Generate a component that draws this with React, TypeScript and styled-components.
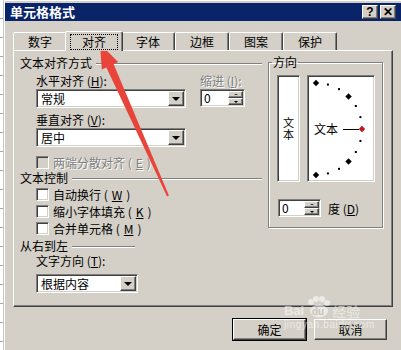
import React from 'react';
import styled, { createGlobalStyle, css } from 'styled-components';

const FACE = '#d4d0c8';
const SHADOW = '#808080';
const DARK = '#404040';
const FONT = '"Noto Sans CJK SC", "DejaVu Sans", sans-serif';

const GlobalStyle = createGlobalStyle`
  html, body {
    margin: 0;
    padding: 0;
    background: ${FACE};
  }
  body {
    font-family: ${FONT};
    font-size: 12px;
    color: #000;
  }
`;

const raised = css`
  background: ${FACE};
  border: 1px solid;
  border-color: #fff ${DARK} ${DARK} #fff;
  box-shadow: inset -1px -1px ${SHADOW};
`;

const sunken = css`
  border: 1px solid;
  border-color: ${SHADOW} #fff #fff ${SHADOW};
  box-shadow: inset 1px 1px ${DARK}, inset -1px -1px ${FACE};
`;

const Screen = styled.div`
  position: relative;
  display: flex;
  width: 401px;
  height: 350px;
  overflow: hidden;
`;

const Sheet = styled.div`
  flex: none;
  width: 3px;
  background: repeating-linear-gradient(to bottom, #fff 0 18px, #a8a8a8 18px 19px);
  border-right: 1px solid #c8c8c8;
`;

const Window = styled.div`
  flex: 1;
  min-width: 0;
  display: flex;
  flex-direction: column;
  background: ${FACE};
  padding: 3px 0 0 1px;
  box-shadow: inset 1px 1px #fff;
`;

const TitleBar = styled.div`
  height: 18px;
  display: flex;
  align-items: center;
  justify-content: space-between;
  padding: 0 5px 0 5px;
  background: #0a246a;
`;

const Title = styled.div`
  color: #fff;
  font-weight: bold;
  font-size: 13px;
  line-height: 14px;
`;

const CaptionButtons = styled.div`
  display: flex;
  gap: 2px;
`;

const CaptionButton = styled.div`
  ${raised};
  box-sizing: border-box;
  width: 16px;
  height: 14px;
  display: grid;
  place-items: center;
  font: bold 12px/10px "Liberation Sans", sans-serif;
`;

const Body = styled.div`
  display: flex;
  flex-direction: column;
  padding: 10px 0 0 8px;
`;

const TabStrip = styled.div`
  position: relative;
  z-index: 1;
  display: flex;
  align-items: flex-end;
  height: 19px;
`;

const Tab = styled.div<{ $active?: boolean }>`
  position: relative;
  box-sizing: border-box;
  width: 54px;
  height: 18px;
  display: flex;
  align-items: center;
  justify-content: center;
  background: ${FACE};
  border: 1px solid;
  border-bottom: none;
  border-color: #fff ${DARK} transparent #fff;
  border-radius: 2px 2px 0 0;
  box-shadow: inset -1px 0 ${SHADOW};
  font-size: 12px;
  line-height: 12px;
  ${(p) =>
    p.$active &&
    css`
      z-index: 1;
      width: 58px;
      height: 20px;
      margin: 0 -2px -1px;
    `}
`;

const TabLabel = styled.span<{ $focus?: boolean }>`
  padding: 1px 11px;
  ${(p) =>
    p.$focus &&
    css`
      outline: 1px dotted #000;
      outline-offset: 0;
    `}
`;

const Panel = styled.div`
  box-sizing: border-box;
  width: 380px;
  height: 257px;
  display: flex;
  align-items: flex-start;
  padding: 5px 0 0 6px;
  border: 1px solid;
  border-color: #fff ${DARK} ${DARK} #fff;
  box-shadow: inset -1px -1px ${SHADOW};
`;

const LeftCol = styled.div`
  width: 242px;
  display: flex;
  flex-direction: column;
`;

const GroupHeader = styled.div<{ $mt?: number }>`
  display: flex;
  align-items: center;
  gap: 4px;
  height: 14px;
  line-height: 14px;
  margin-top: ${(p) => p.$mt ?? 0}px;
`;

const Rule = styled.div<{ $width?: number }>`
  ${(p) => (p.$width ? `width: ${p.$width}px;` : 'flex: 1;')}
  margin-top: 2px;
  border-top: 1px solid ${SHADOW};
  border-bottom: 1px solid #fff;
`;

const Indent = styled.div`
  display: flex;
  flex-direction: column;
  padding-left: 16px;
`;

const Label = styled.div<{ $mt?: number; $disabled?: boolean }>`
  height: 14px;
  line-height: 14px;
  margin-top: ${(p) => p.$mt ?? 0}px;
  white-space: nowrap;
  ${(p) =>
    p.$disabled &&
    css`
      color: ${SHADOW};
      text-shadow: 1px 1px #fff;
    `}
`;

const Key = styled.u`
  text-underline-offset: 1px;
`;

const AlignGrid = styled.div`
  display: grid;
  grid-template-columns: 150px 45px;
  column-gap: 14px;
  align-items: start;
`;

const ComboBox = styled.div<{ $width: number; $mt?: number }>`
  ${sunken};
  box-sizing: border-box;
  width: ${(p) => p.$width}px;
  height: 19px;
  margin-top: ${(p) => p.$mt ?? 0}px;
  padding: 1px;
  display: flex;
  background: #fff;
`;

const ComboText = styled.div`
  flex: 1;
  padding-left: 3px;
  line-height: 15px;
  font-size: 12px;
`;

const DropButton = styled.div`
  ${raised};
  box-sizing: border-box;
  width: 16px;
  height: 15px;
  display: grid;
  place-items: center;
`;

const Caret = styled.div<{ $up?: boolean; $size?: number }>`
  width: 0;
  height: 0;
  border-left: ${(p) => p.$size ?? 4}px solid transparent;
  border-right: ${(p) => p.$size ?? 4}px solid transparent;
  ${(p) =>
    p.$up
      ? `border-bottom: ${(p.$size ?? 4) - 1}px solid #000;`
      : `border-top: ${(p.$size ?? 4)}px solid #000;`}
`;

const SpinBox = styled.div<{ $width: number; $mt?: number }>`
  ${sunken};
  box-sizing: border-box;
  width: ${(p) => p.$width}px;
  height: 18px;
  margin-top: ${(p) => p.$mt ?? 0}px;
  padding: 1px;
  display: flex;
  background: #fff;
`;

const SpinValue = styled.div`
  flex: 1;
  padding-left: 2px;
  line-height: 14px;
`;

const SpinButtons = styled.div`
  display: flex;
  flex-direction: column;
  width: 15px;
`;

const SpinButton = styled.div`
  ${raised};
  box-sizing: border-box;
  height: 7px;
  display: grid;
  place-items: center;
`;

const CheckRow = styled.div<{ $mt?: number; $disabled?: boolean }>`
  display: flex;
  align-items: center;
  gap: 4px;
  height: 14px;
  margin-top: ${(p) => p.$mt ?? 0}px;
  white-space: nowrap;
  ${(p) =>
    p.$disabled &&
    css`
      color: ${SHADOW};
      text-shadow: 1px 1px #fff;
    `}
`;

const CheckBox = styled.div<{ $disabled?: boolean }>`
  ${sunken};
  box-sizing: border-box;
  width: 13px;
  height: 13px;
  background: ${(p) => (p.$disabled ? FACE : '#fff')};
`;

const OrientGroup = styled.fieldset`
  box-sizing: border-box;
  width: 115px;
  height: 172px;
  min-width: 0;
  margin: 0 0 0 6px;
  padding: 7px 7px 0 8px;
  border: 1px solid ${SHADOW};
  box-shadow: 1px 1px #fff, inset 1px 1px #fff;
`;

const Legend = styled.legend`
  margin-left: -5px;
  padding: 0 1px;
  font-size: 12px;
  line-height: 12px;
`;

const OrientRow = styled.div`
  display: flex;
  gap: 7px;
`;

const VertBox = styled.div`
  ${sunken};
  box-sizing: border-box;
  width: 23px;
  height: 107px;
  background: #fff;
  display: flex;
  align-items: center;
  justify-content: center;
`;

const VertText = styled.span`
  writing-mode: vertical-rl;
  text-orientation: upright;
  font-size: 11px;
  line-height: 12px;
  letter-spacing: 1px;
`;

const DialBox = styled.div`
  ${sunken};
  box-sizing: border-box;
  width: 68px;
  height: 107px;
  padding: 2px;
  background: #fff;
  svg {
    display: block;
  }
`;

const DegreeRow = styled.div`
  display: flex;
  align-items: center;
  gap: 7px;
  margin: 17px 0 0 1px;
`;

const ButtonRow = styled.div`
  display: flex;
  justify-content: flex-end;
  gap: 8px;
  margin-top: 12px;
  padding-right: 14px;
`;

const PushButton = styled.div<{ $default?: boolean }>`
  ${raised};
  box-sizing: border-box;
  width: 73px;
  height: 21px;
  display: grid;
  place-items: center;
  line-height: 12px;
  ${(p) =>
    p.$default &&
    css`
      outline: 1px solid #000;
    `}
`;

const Overlay = styled.svg`
  position: absolute;
  left: 0;
  top: 0;
  pointer-events: none;
`;

const Watermark = styled.div`
  position: absolute;
  left: 284px;
  top: 296px;
  color: rgba(255, 255, 255, 0.55);
  font-family: "Liberation Sans", sans-serif;
  pointer-events: none;
`;

const MarkTop = styled.div`
  display: flex;
  align-items: flex-end;
  gap: 2px;
  font-weight: bold;
  font-size: 13px;
  line-height: 14px;
`;

const MarkCn = styled.span`
  font-family: ${FONT};
  font-weight: normal;
  font-size: 14px;
`;

const MarkUrl = styled.div`
  font-size: 10px;
  line-height: 12px;
  letter-spacing: 0.6px;
  margin-top: 1px;
`;

const tabs = ['数字', '对齐', '字体', '边框', '图案', '保护'];

const Combo = ({ value, width, mt }: { value: string; width: number; mt?: number }) => (
  <ComboBox $width={width} $mt={mt}>
    <ComboText>{value}</ComboText>
    <DropButton>
      <Caret $size={4} />
    </DropButton>
  </ComboBox>
);

const Spin = ({ width, mt }: { width: number; mt?: number }) => (
  <SpinBox $width={width} $mt={mt}>
    <SpinValue>0</SpinValue>
    <SpinButtons>
      <SpinButton>
        <Caret $up $size={2} />
      </SpinButton>
      <SpinButton>
        <Caret $size={2} />
      </SpinButton>
    </SpinButtons>
  </SpinBox>
);

// dial marks every 15 degrees on a half circle
const Dial = () => {
  const cx = 6;
  const cy = 51;
  const r = 46;
  const marks = [];
  for (let i = 0; i <= 12; i++) {
    const a = (i * 15 * Math.PI) / 180;
    const x = cx + r * Math.sin(a);
    const y = cy - r * Math.cos(a);
    if (i % 3 === 0) {
      const s = 3.2;
      marks.push(
        <polygon
          key={i}
          points={`${x},${y - s} ${x + s},${y} ${x},${y + s} ${x - s},${y}`}
          fill={i === 6 ? '#c0141e' : '#000'}
        />
      );
    } else {
      marks.push(<rect key={i} x={x - 1} y={y - 1} width={2} height={2} fill="#000" />);
    }
  }
  return (
    <svg width="64" height="103" viewBox="0 0 64 103">
      {marks}
      <text x="4" y="56" fontSize="12" fontFamily={FONT} fill="#000">
        文本
      </text>
      <line x1="33" y1="51.5" x2="49" y2="51.5" stroke="#000" strokeWidth="1" />
    </svg>
  );
};

export default function App() {
  return (
    <Screen>
      <GlobalStyle />
      <Sheet />
      <Window>
        <TitleBar>
          <Title>单元格格式</Title>
          <CaptionButtons>
            <CaptionButton>?</CaptionButton>
            <CaptionButton>✕</CaptionButton>
          </CaptionButtons>
        </TitleBar>
        <Body>
          <TabStrip>
            {tabs.map((t) => (
              <Tab key={t} $active={t === '对齐'}>
                <TabLabel $focus={t === '对齐'}>{t}</TabLabel>
              </Tab>
            ))}
          </TabStrip>
          <Panel>
            <LeftCol>
              <GroupHeader>
                文本对齐方式
                <Rule />
              </GroupHeader>
              <Indent>
                <AlignGrid>
                  <Label $mt={4}>
                    水平对齐 (<Key>H</Key>):
                  </Label>
                  <Label $mt={4} $disabled>
                    缩进 (<Key>I</Key>):
                  </Label>
                  <Combo value="常规" width={150} mt={1} />
                  <Spin width={45} mt={1} />
                </AlignGrid>
                <Label $mt={5}>
                  垂直对齐 (<Key>V</Key>):
                </Label>
                <Combo value="居中" width={150} mt={1} />
                <CheckRow $mt={8} $disabled>
                  <CheckBox $disabled />
                  两端分散对齐 (<Key>E</Key>)
                </CheckRow>
              </Indent>
              <GroupHeader $mt={2}>
                文本控制
                <Rule />
              </GroupHeader>
              <Indent>
                <CheckRow $mt={2}>
                  <CheckBox />
                  自动换行 (<Key>W</Key>)
                </CheckRow>
                <CheckRow $mt={3}>
                  <CheckBox />
                  缩小字体填充 (<Key>K</Key>)
                </CheckRow>
                <CheckRow $mt={3}>
                  <CheckBox />
                  合并单元格 (<Key>M</Key>)
                </CheckRow>
              </Indent>
              <GroupHeader $mt={4}>
                从右到左
                <Rule $width={63} />
              </GroupHeader>
              <Indent>
                <Label $mt={1}>
                  文字方向 (<Key>T</Key>):
                </Label>
                <Combo value="根据内容" width={102} mt={6} />
              </Indent>
            </LeftCol>
            <OrientGroup>
              <Legend>方向</Legend>
              <OrientRow>
                <VertBox>
                  <VertText>文本</VertText>
                </VertBox>
                <DialBox>
                  <Dial />
                </DialBox>
              </OrientRow>
              <DegreeRow>
                <Spin width={43} />
                <span>
                  度 (<Key>D</Key>)
                </span>
              </DegreeRow>
            </OrientGroup>
          </Panel>
          <ButtonRow>
            <PushButton $default>确定</PushButton>
            <PushButton>取消</PushButton>
          </ButtonRow>
        </Body>
      </Window>
      <Watermark>
        <MarkTop>
          Bai
          <svg width="24" height="22" viewBox="0 0 24 22">
            <circle cx="5" cy="6" r="3" fill="currentColor" />
            <circle cx="10" cy="3" r="3" fill="currentColor" />
            <circle cx="16" cy="3" r="3" fill="currentColor" />
            <circle cx="21" cy="7" r="3" fill="currentColor" />
            <ellipse cx="13" cy="15" rx="9" ry="6.5" fill="currentColor" />
            <text x="6" y="19" fontSize="10" fontWeight="bold" fill="#c9c5bd" fontFamily="Liberation Sans">
              du
            </text>
          </svg>
          <MarkCn>经验</MarkCn>
        </MarkTop>
        <MarkUrl>jingyan.baidu.com</MarkUrl>
      </Watermark>
      <Overlay width="401" height="350" viewBox="0 0 401 350">
        <polygon
          points="100,44 118.2,62 113.6,64.1 168.9,195.6 167.1,196.4 106.4,67.5 101.8,69.6"
          fill="#e8443a"
        />
      </Overlay>
    </Screen>
  );
}
